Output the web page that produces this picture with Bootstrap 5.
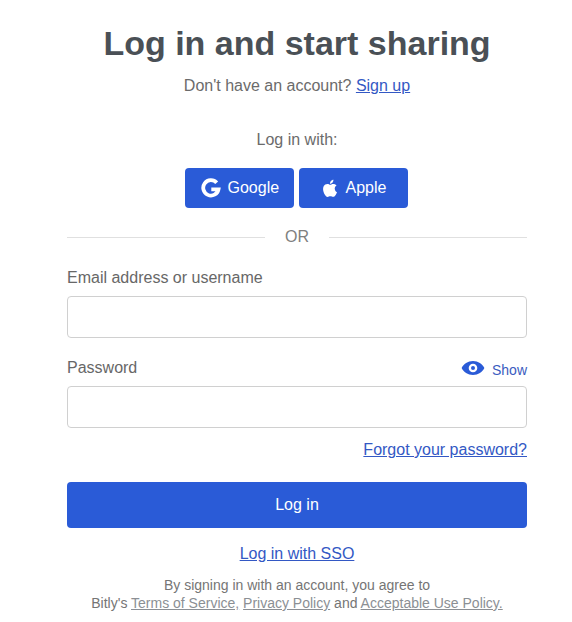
<!DOCTYPE html>
<html lang="en">
<head>
<meta charset="UTF-8">
<meta name="viewport" content="width=device-width, initial-scale=1.0">
<title>Log in</title>
<link href="https://cdn.jsdelivr.net/npm/bootstrap@5.3.3/dist/css/bootstrap.min.css" rel="stylesheet">
<style>
body { font-family: "Liberation Sans", Arial, sans-serif; color: #6b6b6b; background: #fff; }
a { color: #3358c4; }
.login-wrap { width: 460px; margin-left: 67px; padding-top: 21px; }
.login-title { font-size: 34px; line-height: 44px; font-weight: 700; color: #4a5056; margin: 0; }
.signup-line { font-size: 16px; line-height: 20px; margin-top: 11px; }
.with-line { font-size: 16px; line-height: 20px; margin-top: 34px; }
.btn-blue { background: #2a5bd7; border: 0; color: #fff; border-radius: 4px; font-size: 16px; }
.btn-blue:hover { background: #2a5bd7; color: #fff; }
.btn-social { width: 109px; height: 40px; gap: 7px; }
.btn-google { padding: 0 0 0 16px; }
.btn-apple { padding: 0 0 0 24px; gap: 8px; }
.social-row { margin-top: 18px; padding-right: 2px; gap: 5px; }
.or-row { margin-top: 19px; height: 20px; color: #808080; font-size: 16px; gap: 20px; }
.or-rule { flex: 1; border-top: 1px solid #e0e0e0; }
.field-label { font-size: 16px; line-height: 20px; color: #676767; margin: 0; }
.email-label { margin-top: 21px; }
.email-box { margin-top: 8px; }
.field-box { height: 42px; border: 1px solid #d0d0d0; border-radius: 4px; }
.pass-row { margin-top: 20px; }
.pass-box { margin-top: 8px; }
.show-link { font-size: 14px; color: #3a5cc0; gap: 7px; }
.show-text { line-height: 16px; margin-top: 4px; }
.forgot-line { font-size: 16px; line-height: 20px; margin-top: 12px; }
.btn-login { height: 46px; margin-top: 22px; }
.sso-line { font-size: 16px; line-height: 20px; margin-top: 16px; }
.legal { font-size: 14px; line-height: 18px; margin-top: 12px; color: #757575; }
.legal a { color: #8b8f94; }
</style>
</head>
<body>
<div class="login-wrap">
  <h1 class="login-title text-center">Log in and start sharing</h1>
  <div class="signup-line text-center">Don't have an account? <a href="#">Sign up</a></div>
  <div class="with-line text-center">Log in with:</div>
  <div class="social-row d-flex justify-content-center">
    <button class="btn btn-blue btn-social btn-google d-flex align-items-center">
      <svg width="20" height="20" viewBox="0 0 20 20"><path fill="none" stroke="#fff" stroke-width="3.8" d="M15.700 4.700A7.700 7.700 0 1 0 17.500 11.300H10.300"/></svg>
      Google
    </button>
    <button class="btn btn-blue btn-social btn-apple d-flex align-items-center">
      <svg width="15" height="18" viewBox="3 1 18 21"><path fill="#fff" d="M17.05 12.54c-.03-2.6 2.12-3.85 2.22-3.91-1.21-1.77-3.09-2.01-3.76-2.04-1.6-.16-3.12.94-3.93.94-.81 0-2.06-.92-3.39-.89-1.74.03-3.35 1.01-4.25 2.57-1.81 3.14-.46 7.8 1.3 10.35.86 1.25 1.89 2.65 3.24 2.6 1.3-.05 1.79-.84 3.36-.84 1.57 0 2.01.84 3.39.81 1.4-.02 2.29-1.27 3.14-2.53.99-1.45 1.4-2.86 1.42-2.93-.03-.01-2.72-1.04-2.74-4.13zM14.46 4.9c.72-.87 1.2-2.07 1.07-3.28-1.03.04-2.28.69-3.02 1.56-.66.77-1.24 2-1.08 3.18 1.15.09 2.32-.58 3.03-1.46z"/></svg>
      Apple
    </button>
  </div>
  <div class="or-row d-flex align-items-center">
    <div class="or-rule"></div><div>OR</div><div class="or-rule"></div>
  </div>
  <form>
    <label class="field-label email-label d-block">Email address or username</label>
    <div class="field-box email-box"></div>
    <div class="pass-row d-flex justify-content-between align-items-center">
      <label class="field-label">Password</label>
      <a href="#" class="show-link d-flex align-items-center text-decoration-none">
        <svg width="24" height="16" viewBox="0 0 24 16"><path fill="#2a5bd7" fill-rule="evenodd" d="M12 1C6.8 1 2.6 4 .6 8c2 4 6.2 7 11.400 7s9.400-3 11.400-7c-2-4-6.200-7-11.400-7zm0 2.700a4.300 4.300 0 1 1 0 8.600 4.300 4.300 0 0 1 0-8.600zm0 2.300a2 2 0 1 0 0 4 2 2 0 0 0 0-4z"/></svg>
        <span class="show-text">Show</span>
      </a>
    </div>
    <div class="field-box pass-box"></div>
    <div class="forgot-line text-end"><a href="#">Forgot your password?</a></div>
    <button type="button" class="btn btn-blue btn-login w-100 d-block">Log in</button>
  </form>
  <div class="sso-line text-center"><a href="#">Log in with SSO</a></div>
  <div class="legal text-center">By signing in with an account, you agree to<br>Bitly's <a href="#">Terms of Service,</a> <a href="#">Privacy Policy</a> and <a href="#">Acceptable Use Policy.</a></div>
</div>
</body>
</html>
